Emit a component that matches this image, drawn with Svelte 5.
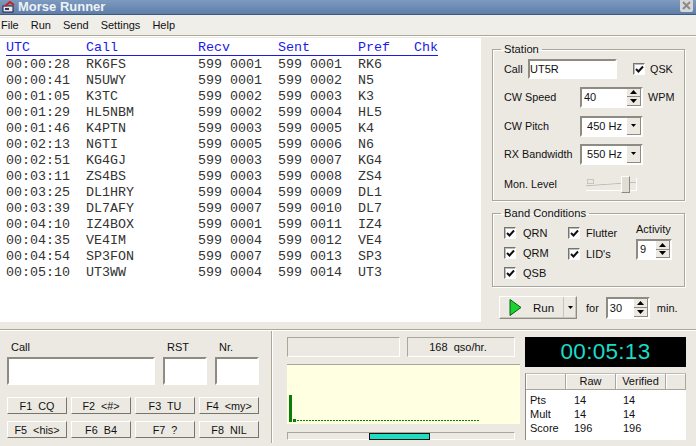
<script>
  const rows = [
    ['00:00:28','RK6FS','599 0001','599 0001','RK6'],
    ['00:00:41','N5UWY','599 0001','599 0002','N5'],
    ['00:01:05','K3TC','599 0002','599 0003','K3'],
    ['00:01:29','HL5NBM','599 0002','599 0004','HL5'],
    ['00:01:46','K4PTN','599 0003','599 0005','K4'],
    ['00:02:13','N6TI','599 0005','599 0006','N6'],
    ['00:02:51','KG4GJ','599 0003','599 0007','KG4'],
    ['00:03:11','ZS4BS','599 0003','599 0008','ZS4'],
    ['00:03:25','DL1HRY','599 0004','599 0009','DL1'],
    ['00:03:39','DL7AFY','599 0007','599 0010','DL7'],
    ['00:04:10','IZ4BOX','599 0001','599 0011','IZ4'],
    ['00:04:35','VE4IM','599 0004','599 0012','VE4'],
    ['00:04:54','SP3FON','599 0007','599 0013','SP3'],
    ['00:05:10','UT3WW','599 0004','599 0014','UT3']
  ];
  const fkeys = ['F1  CQ','F2  <#>','F3  TU','F4  <my>','F5  <his>','F6  B4','F7  ?','F8  NIL'];
  const score = [['Pts','14','14'],['Mult','14','14'],['Score','196','196']];
</script>

{#snippet check()}
  <span class="check"><svg width="9" height="9" viewBox="0 0 9 9"><path d="M1 4 L3.5 6.5 L8 1.5" fill="none" stroke="#111" stroke-width="2"/></svg></span>
{/snippet}

{#snippet spin()}
  <span class="spin">
    <span class="sb"><svg width="7" height="4" viewBox="0 0 7 4"><path d="M3.5 0 L7 4 H0 Z" fill="#000"/></svg></span>
    <span class="sb"><svg width="7" height="4" viewBox="0 0 7 4"><path d="M0 0 H7 L3.5 4 Z" fill="#000"/></svg></span>
  </span>
{/snippet}

{#snippet drop()}
  <span class="dropbtn"><svg width="7" height="4" viewBox="0 0 7 4"><path d="M1 0 H6 L3.5 3 Z" fill="#000"/></svg></span>
{/snippet}

<div class="win">
  <header class="title">
    <svg class="logo" width="14" height="13" viewBox="0 0 14 13">
      <rect x="1" y="5" width="10" height="6" fill="#e8e8f0" stroke="#223" />
      <path d="M3 5 L8 1 L12 4" fill="none" stroke="#c22" stroke-width="2"/>
      <rect x="3" y="7" width="4" height="2" fill="#336"/>
    </svg>
    <span class="ttext">Morse Runner</span>
    <span class="close"><svg width="11" height="11" viewBox="0 0 11 11"><path d="M2 2 L9 9 M9 2 L2 9" stroke="#8a8a8a" stroke-width="2"/></svg></span>
  </header>

  <nav class="menu">
    <span>File</span><span>Run</span><span>Send</span><span>Settings</span><span>Help</span>
  </nav>

  <main class="top">
    <section class="log">
      <div class="lrow lhead">
        <span>UTC</span><span>Call</span><span>Recv</span><span>Sent</span><span>Pref</span><span>Chk</span>
      </div>
      {#each rows as r}
        <div class="lrow">{#each r as c}<span>{c}</span>{/each}<span></span></div>
      {/each}
    </section>

    <aside class="side">
      <fieldset class="group station">
        <legend>Station</legend>
        <div class="srow r1">
          <span class="l1">Call</span>
          <span class="field callf">UT5R</span>
          {@render check()}
          <span class="qsk">QSK</span>
        </div>
        <div class="srow">
          <span class="lab">CW Speed</span>
          <span class="field combo">40{@render spin()}</span>
          <span class="wpm">WPM</span>
        </div>
        <div class="srow r3">
          <span class="lab">CW Pitch</span>
          <span class="field combo">&nbsp;450 Hz{@render drop()}</span>
        </div>
        <div class="srow">
          <span class="lab">RX Bandwidth</span>
          <span class="field combo">&nbsp;550 Hz{@render drop()}</span>
        </div>
        <div class="srow r5">
          <span class="lab">Mon. Level</span>
          <span class="slider"><i class="tick"></i><i class="thumb"></i></span>
        </div>
      </fieldset>

      <fieldset class="group band">
        <legend>Band Conditions</legend>
        <div class="bandgrid">
          <div class="bcol c1">
            <label class="ck">{@render check()}QRN</label>
            <label class="ck">{@render check()}QRM</label>
            <label class="ck">{@render check()}QSB</label>
          </div>
          <div class="bcol c2">
            <label class="ck">{@render check()}Flutter</label>
            <label class="ck">{@render check()}LID's</label>
          </div>
          <div class="act">
            <span>Activity</span>
            <span class="field actf">9{@render spin()}</span>
          </div>
        </div>
      </fieldset>

      <div class="runrow">
        <span class="runbtn">
          <span class="runmain">
            <svg width="13" height="17" viewBox="0 0 13 17"><path d="M1 0.5 L12 8.5 L1 16.5 Z" fill="#19d42e" stroke="#0a5a14"/></svg>
            <span class="runt">Run</span>
          </span>
          <span class="runarrow"><svg width="7" height="4" viewBox="0 0 7 4"><path d="M1 0 H6 L3.5 3 Z" fill="#000"/></svg></span>
        </span>
        <span class="for">for</span>
        <span class="field forf">30{@render spin()}</span>
        <span class="min">min.</span>
      </div>
    </aside>
  </main>

  <footer class="bottom">
    <section class="entry">
      <div class="elabels"><span class="e1">Call</span><span class="e2">RST</span><span class="e3">Nr.</span></div>
      <div class="einputs"><span class="field i1"></span><span class="field i2"></span><span class="field i3"></span></div>
      <div class="fgrid">
        {#each fkeys as k}<button>{k}</button>{/each}
      </div>
    </section>

    <section class="mid">
      <div class="stat">
        <span class="sunk s1"></span>
        <span class="sunk s2">168&nbsp; qso/hr.</span>
      </div>
      <div class="chart">
        <i class="bar tall"></i><i class="bar short"></i><i class="dash"></i>
      </div>
      <div class="prog"><i class="fill"></i></div>
    </section>

    <section class="right">
      <div class="clock">00:05:13</div>
      <div class="score">
        <div class="shead"><span></span><span>Raw</span><span>Verified</span><span></span></div>
        <div class="sbody">
          {#each score as s}
            <div class="sline"><span>{s[0]}</span><span>{s[1]}</span><span>{s[2]}</span></div>
          {/each}
        </div>
      </div>
    </section>
  </footer>
</div>

<style>
  :global(body) { margin: 0; background: #ece9e3; }
  .win {
    width: 696px; height: 446px; overflow: hidden; background: #ece9e3;
    font-family: "Liberation Sans", Arial, sans-serif; font-size: 10.8px; color: #111;
    display: flex; flex-direction: column;
  }
  .title {
    height: 14px; flex: none; display: flex; align-items: center;
    background: linear-gradient(#7d9ac0, #5f7fa8); border-bottom: 1px solid #3d5a80;
  }
  .logo { margin-left: 2px; }
  .ttext { margin-left: 2px; color: #eef2f7; font-weight: bold; font-size: 13px; line-height: 14px; }
  .close {
    margin-left: auto; margin-right: 3px; width: 13px; height: 13px; margin-top: -3px;
    background: #d8d8d8; border-radius: 2px; display: flex; align-items: center; justify-content: center;
  }
  .menu {
    height: 21px; flex: none; display: flex; align-items: center; padding: 0 0 1px 1px; box-sizing: border-box; gap: 12px;
    border-bottom: 1px solid #aca899; box-shadow: 0 1px 0 #fff; background: #f0eee8; font-size: 11px;
  }
  .top { display: flex; height: 293px; flex: none; }
  .log {
    width: 481px; height: 284px; margin-top: 2px; padding: 3px 0 0 6px; box-sizing: border-box;
    background: #fff; flex: none;
    font-family: "Liberation Mono", "Courier New", monospace; font-size: 13.33px; color: #333;
  }
  .lrow {
    display: grid; grid-template-columns: 80px 112px 80px 80px 56px 24px; height: 16px; line-height: 16px;
    width: 432px; white-space: pre;
  }
  .lhead { color: #1a1ae6; border-bottom: 1px solid #1a1ae6; height: 14px; line-height: 14px; margin-bottom: 1px; }
  .side { width: 215px; flex: none; padding: 7px 0 0 11px; box-sizing: border-box; }
  .group {
    margin: 0; padding: 0; width: 193px; box-sizing: border-box; border: 1px solid #a9a69c;
    box-shadow: inset 1px 1px 0 #fff, 1px 1px 0 #fff;
  }
  legend { margin-left: -3px; padding: 0 3px; font-size: 11.2px; line-height: 12px; }
  .station { height: 158px; padding-left: 11px; }
  .srow { display: flex; align-items: center; height: 28px; }
  .r1 { margin-top: 3px; height: 22px; margin-bottom: 3px; }
  .r3 { margin-top: 1px; }
  .r5 { margin-top: 2px; }
  .l1 { width: 24px; }
  .lab { width: 76px; flex: none; white-space: nowrap; }
  .field {
    background: #fff; display: inline-flex; align-items: center; box-sizing: border-box; position: relative;
    border: 2px solid; border-color: #8e8b82 #fff #fff #8e8b82; padding-left: 2px; color: #111; font-size: 11px;
  }
  .callf { width: 89px; height: 20px; padding-left: 0; }
  .r1 .check { margin-left: 16px; }
  .qsk { margin-left: 5px; }
  .combo { width: 63px; height: 21px; }
  .wpm { margin-left: 5px; }
  .check {
    width: 12px; height: 12px; flex: none; background: #fff; box-sizing: border-box; display: inline-flex;
    align-items: center; justify-content: center;
    border: 1px solid; border-color: #77746c #fff #fff #77746c; box-shadow: inset 1px 1px 0 #bbb;
  }
  .spin {
    position: absolute; right: 0; top: 0; bottom: 0; width: 14px; display: flex; flex-direction: column;
  }
  .sb {
    flex: 1; background: #ece9e3; display: flex; align-items: center; justify-content: center;
    border-right: 1px solid #8e8b82; border-bottom: 1px solid #8e8b82;
  }
  .dropbtn {
    position: absolute; right: 0; top: 0; bottom: 0; width: 14px; background: #ece9e3;
    border-right: 1px solid #8e8b82; border-bottom: 1px solid #8e8b82; box-sizing: border-box;
    display: flex; align-items: center; justify-content: center;
  }
  .slider {
    position: relative; margin-left: 6px; width: 51px; height: 13px; flex: none;
    border-right: 1px solid #fff; border-bottom: 1px solid #fff; box-sizing: border-box;
    background: linear-gradient(176deg, transparent 45%, #bbb 50%, transparent 56%);
  }
  .tick { position: absolute; left: 1px; top: 1px; width: 5px; height: 3px; border: 1px solid #c8c5bb; }
  .thumb {
    position: absolute; left: 35px; top: -2px; width: 7px; height: 15px; background: #e0ddd5;
    border: 1px solid; border-color: #fff #888 #888 #fff;
  }
  .band { height: 80px; margin-top: 6px; padding-left: 11px; }
  .bandgrid { display: flex; }
  .bcol { display: flex; flex-direction: column; padding-top: 4px; }
  .c1 { width: 64px; }
  .c2 { width: 68px; }
  .ck { display: flex; align-items: center; gap: 7px; height: 20px; font-size: 11px; }
  .c2 .ck { gap: 6px; height: 22px; }
  .c2 .ck:first-child { height: 20px; }
  .act { display: flex; flex-direction: column; padding-top: 3px; gap: 2px; line-height: 15px; font-size: 11px; }
  .actf { width: 36px; height: 21px; }
  .runrow { display: flex; align-items: center; margin-top: 9px; margin-left: 7px; height: 23px; }
  .runbtn {
    display: flex; width: 78px; height: 23px; box-sizing: border-box;
    border: 1px solid; border-color: #fff #8e8b82 #8e8b82 #fff; box-shadow: inset -1px -1px 0 #c8c5bb;
  }
  .runmain {
    flex: 1; display: flex; align-items: center; padding-left: 9px; box-sizing: border-box;
    border-right: 1px solid #c8c5bb;
  }
  .runt { margin-left: 11px; font-size: 11.5px; }
  .runarrow { width: 12px; flex: none; display: flex; align-items: center; justify-content: center; }
  .for { margin-left: 9px; font-size: 11px; }
  .forf { width: 44px; height: 22px; margin-left: 7px; }
  .min { margin-left: 7px; font-size: 11px; }

  .bottom {
    height: 117px; flex: none; display: flex; padding-top: 1px; box-sizing: border-box;
    border-top: 1px solid #aca899; box-shadow: inset 0 1px 0 #fff;
  }
  .entry {
    width: 272px; height: 112px; flex: none; box-sizing: border-box; padding-left: 7px;
    border-right: 1px solid #aca899; box-shadow: 1px 0 0 #fff;
  }
  .elabels { position: relative; height: 16px; margin-top: 10px; line-height: 13px; font-size: 11px; }
  .elabels span { position: absolute; top: 0; }
  .e1 { left: 4px; } .e2 { left: 160px; } .e3 { left: 212px; }
  .einputs { display: flex; gap: 8px; }
  .einputs .field { height: 28px; }
  .i1 { width: 148px; } .i2 { width: 44px; } .i3 { width: 44px; }
  .fgrid { display: grid; grid-template-columns: repeat(4, 60px); gap: 7px 4px; margin-top: 12px; }
  button {
    height: 17px; padding: 0; background: #ece9e3; font: 10.8px "Liberation Sans", Arial, sans-serif; color: #111;
    border: 1px solid; border-color: #fff #77746c #77746c #fff; white-space: pre;
  }
  .mid { width: 228px; flex: none; margin-left: 15px; padding-top: 6px; }
  .stat { display: flex; gap: 7px; height: 20px; }
  .sunk {
    box-sizing: border-box; border: 1px solid; border-color: #a9a69c #fff #fff #a9a69c;
    display: flex; align-items: center; justify-content: center;
  }
  .s1 { width: 113px; }
  .s2 { width: 108px; padding-right: 6px; font-size: 11px; }
  .chart {
    position: relative; height: 60px; margin-top: 7px; width: 233px; background: #ffffe1;
    border-top: 1px solid #a9a69c; box-sizing: border-box;
  }
  .bar { position: absolute; background: #0b7d0b; bottom: 2px; }
  .tall { left: 2px; width: 3px; height: 27px; }
  .short { left: 6px; width: 3px; height: 3px; }
  .dash {
    position: absolute; left: 10px; bottom: 3px; width: 183px; height: 1px;
    background: repeating-linear-gradient(90deg, #0b7d0b 0 2px, transparent 2px 3px);
  }
  .prog {
    position: relative; height: 8px; margin-top: 8px; width: 228px; box-sizing: border-box;
    border: 1px solid; border-color: #a9a69c #fff #fff #a9a69c;
  }
  .fill {
    position: absolute; left: 81px; top: 0; width: 61px; height: 7px; background: #20dcc0; border: 1px solid #111;
    box-sizing: border-box;
  }
  .right { width: 161px; margin-left: 10px; flex: none; padding-top: 6px; }
  .clock {
    height: 30px; background: #000; color: #19dcc8; font-size: 22.5px; line-height: 30px; text-align: center;
    letter-spacing: 0.3px;
  }
  .score {
    height: 67px; margin-top: 6px; background: #fff; box-sizing: border-box;
    border-left: 1px solid #8e8b82; border-top: 1px solid #bbb;
  }
  .shead {
    display: grid; grid-template-columns: 40px 50px 50px 20px; height: 16px; background: #ece9e3; line-height: 15px;
    text-align: center; font-size: 11px;
  }
  .shead span { border-right: 1px solid #a9a69c; border-bottom: 1px solid #a9a69c; box-shadow: inset 1px 1px 0 #fff; }
  .sbody { padding-top: 3px; padding-left: 4px; font-size: 11px; }
  .sline { display: grid; grid-template-columns: 44px 49px 40px; height: 14px; line-height: 14px; }
</style>
